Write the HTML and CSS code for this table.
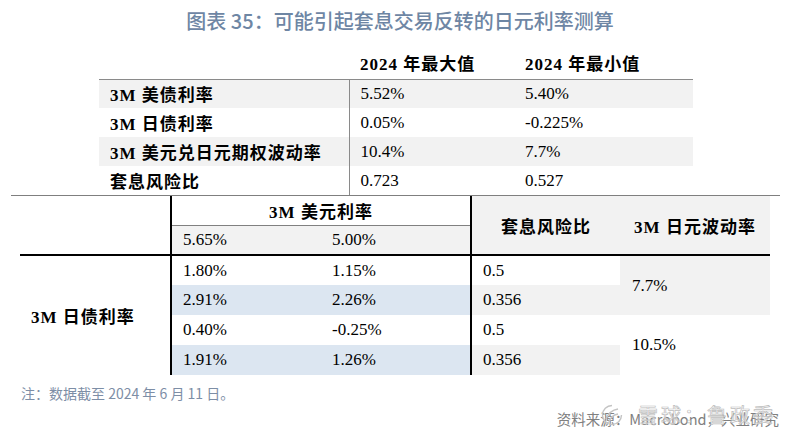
FILE: index.html
```html
<!DOCTYPE html>
<html lang="zh-CN">
<head>
<meta charset="utf-8">
<title>图表 35</title>
<link rel="stylesheet" href="styles.css">
</head>
<body>
<div class="page">
  <h1 class="title">图表 35：可能引起套息交易反转的日元利率测算</h1>

  <div class="upper-wrap">
    <table class="upper">
      <colgroup><col class="c1"><col class="c2"><col class="c3"></colgroup>
      <thead>
        <tr>
          <th class="hdr"></th>
          <th class="hdr">2024 年最大值</th>
          <th class="hdr">2024 年最小值</th>
        </tr>
      </thead>
      <tbody>
        <tr class="grey"><th class="lab">3M 美债利率</th><td>5.52%</td><td>5.40%</td></tr>
        <tr><th class="lab">3M 日债利率</th><td>0.05%</td><td>-0.225%</td></tr>
        <tr class="grey"><th class="lab">3M 美元兑日元期权波动率</th><td>10.4%</td><td>7.7%</td></tr>
        <tr><th class="lab">套息风险比</th><td>0.723</td><td>0.527</td></tr>
      </tbody>
    </table>
  </div>

  <table class="lower">
    <colgroup><col class="k1"><col class="k2"><col class="k3"><col class="k4"><col class="k5"></colgroup>
    <tr class="h1">
      <td rowspan="2" class="corner"></td>
      <th colspan="2" class="usd">3M 美元利率</th>
      <th rowspan="2" class="gh vl">套息风险比</th>
      <th rowspan="2" class="gh">3M 日元波动率</th>
    </tr>
    <tr class="h2">
      <td class="g vl">5.65%</td><td class="g">5.00%</td>
    </tr>
    <tr class="body-top">
      <th rowspan="4" class="rowlab">3M 日债利率</th>
      <td class="vl">1.80%</td><td>1.15%</td><td class="vl">0.5</td><td rowspan="2" class="g vol">7.7%</td>
    </tr>
    <tr>
      <td class="b vl">2.91%</td><td class="b">2.26%</td><td class="g vl">0.356</td>
    </tr>
    <tr>
      <td class="vl">0.40%</td><td>-0.25%</td><td class="vl">0.5</td><td rowspan="2" class="vol">10.5%</td>
    </tr>
    <tr>
      <td class="b vl">1.91%</td><td class="b">1.26%</td><td class="g vl">0.356</td>
    </tr>
  </table>

  <p class="note">注：数据截至 2024 年 6 月 11 日。</p>
  <p class="source">资料来源：Macrobond，兴业研究</p>

  <div class="watermark">
    <svg class="wm-logo" width="24" height="24" viewBox="0 0 24 24">
      <path d="M12 2.5a9.5 9.5 0 1 0 9.5 9.5" fill="none" stroke="#c4c4c4" stroke-width="1.4"/>
      <path d="M6 16c2-5 6-9 12-10M9 19c1-4 4-7 9-8" fill="none" stroke="#c4c4c4" stroke-width="1.4"/>
    </svg>
    <span class="wm-text">雪球：鲁政委</span>
  </div>
</div>
</body>
</html>
```

FILE: styles.css
```css
* { box-sizing: border-box; }

body {
  margin: 0;
  background: #ffffff;
  font-family: "Liberation Serif", "Noto Sans CJK SC", serif;
  color: #000;
}

.page {
  position: relative;
  width: 800px;
  height: 442px;
  overflow: hidden;
}

.title {
  margin: 0;
  height: 46px;
  padding-top: 7px;
  line-height: 28px;
  font-family: "Noto Sans CJK SC", sans-serif;
  font-size: 20px;
  font-weight: 500;
  color: #6e86a4;
  text-align: center;
}

table {
  border-collapse: collapse;
  table-layout: fixed;
  border-spacing: 0;
}

th, td {
  padding: 0 0 0 11px;
  font-size: 17px;
  text-align: left;
  white-space: nowrap;
  font-weight: normal;
}

th {
  font-weight: bold;
  letter-spacing: 1px;
}

/* upper table */
.upper-wrap {
  margin-left: 11px;
  width: 769px;
  padding-left: 88px;
  border-bottom: 1px solid #7f7f7f;
}

.upper { width: 594px; }
.upper .c1 { width: 250px; }
.upper .c2 { width: 166px; }
.upper .c3 { width: 178px; }

.upper thead tr { height: 33px; }
.upper tbody tr { height: 29px; }

.upper .hdr {
  vertical-align: bottom;
  padding-bottom: 4px;
  border-bottom: 1px solid #8a8a8a;
}

.upper .lab { border-right: 1px solid #8a8a8a; }
.upper td:last-child { padding-left: 10px; }
.upper .hdr:last-child { padding-left: 10px; }

.grey th, .grey td { background: #f2f2f2; }

/* lower table */
.lower {
  width: 750px;
  margin-left: 20px;
}
.lower .k1 { width: 151px; }
.lower .k2 { width: 150px; }
.lower .k3 { width: 150px; }
.lower .k4 { width: 149px; }
.lower .k5 { width: 150px; }

.lower tr { height: 30px; }
.lower .h1 { height: 29px; }

.lower .usd {
  text-align: center;
  padding-left: 0;
  border-left: 2px solid #000;
  border-bottom: 1px solid #808080;
}

.lower .gh {
  background: #f2f2f2;
  text-align: center;
  padding-left: 0;
}

.lower .vl { border-left: 2px solid #000; }

.lower .body-top th,
.lower .body-top td { border-top: 2px solid #000; }

.lower .rowlab { vertical-align: middle; }

.lower .vol { padding-left: 12px; }

.lower .g { background: #f2f2f2; }
.lower .b { background: #dce6f1; }

.note {
  margin: 8px 0 0 21px;
  font-family: "Noto Sans CJK SC", sans-serif;
  font-size: 14px;
  line-height: 20px;
  color: #7d8ea6;
}

.source {
  margin: 6px 0 0 0;
  padding-right: 21px;
  text-align: right;
  font-family: "Noto Sans CJK SC", sans-serif;
  font-size: 14.5px;
  line-height: 20px;
  color: #808080;
}

.watermark {
  position: absolute;
  left: 600px;
  top: 402px;
  display: flex;
  align-items: center;
  gap: 14px;
}

.wm-text {
  font-family: "Noto Sans CJK SC", sans-serif;
  font-size: 20px;
  letter-spacing: 3px;
  line-height: 26px;
  color: rgba(255, 255, 255, 0.55);
  -webkit-text-stroke: 0.7px #bdbdbd;
}
```
